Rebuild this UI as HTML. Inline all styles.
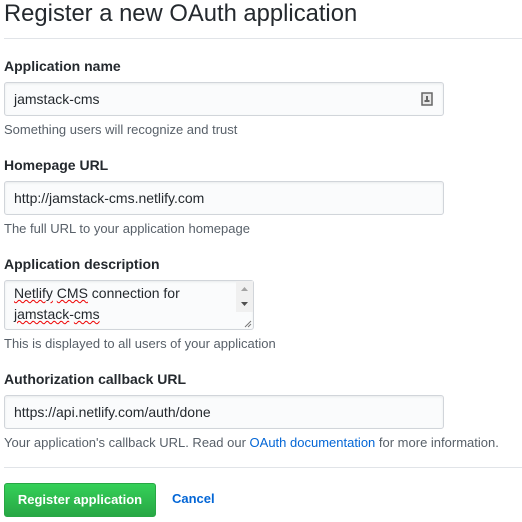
<!DOCTYPE html>
<html><head><style>
body{margin:0;background:#fff;font-family:"Liberation Sans",Arial,sans-serif;color:#24292e;width:522px;height:522px;overflow:hidden;position:relative}
.a{position:absolute}
h1{position:absolute;left:4px;top:0;margin:0;font-size:23.8px;font-weight:normal;line-height:28px}
.hr{position:absolute;left:4px;width:518px;height:1px;background:#e1e4e8}
.lbl{position:absolute;left:4px;font-weight:bold;font-size:14px;line-height:18px}
.in{position:absolute;left:4px;height:32px;background:#fafbfc;border:1px solid #d1d5da;border-radius:3px;font-size:14px;line-height:32px;padding-left:9px;box-sizing:content-box;width:429px;box-shadow:inset 0 1px 2px rgba(27,31,35,.075)}
.note{position:absolute;left:4px;font-size:13px;color:#586069;line-height:16px}
a{color:#0366d6;text-decoration:none}
.sq{text-decoration:underline wavy #e00;text-decoration-thickness:1px}
</style></head><body>
<h1>Register a new OAuth application</h1>
<div class="hr" style="top:38px"></div>

<div class="lbl" style="top:57px">Application name</div>
<div class="in" style="top:82px">jamstack-cms
<svg class="a" style="right:10px;top:9px" width="12" height="14" viewBox="0 0 12 14"><rect x="1" y="1" width="10" height="12" fill="#e8e8e8" stroke="#666" stroke-width="1.5"/><rect x="5" y="4" width="2" height="4" fill="#666"/><rect x="3.5" y="8" width="5" height="2" fill="#666"/></svg></div>
<div class="note" style="top:122px">Something users will recognize and trust</div>

<div class="lbl" style="top:156px">Homepage URL</div>
<div class="in" style="top:181px">http://jamstack-cms.netlify.com</div>
<div class="note" style="top:221px">The full URL to your application homepage</div>

<div class="lbl" style="top:255px">Application description</div>
<div class="in" style="top:280px;width:239px;line-height:21px;padding-top:2px;height:46px"><span class="sq">Netlify</span> <span class="sq">CMS</span> connection for<br><span class="sq">jamstack</span>-<span class="sq">cms</span>
<div class="a" style="right:0;top:0;width:17px;height:31px;background:#f0f0f0"></div>
<svg class="a" style="right:4px;top:5px" width="9" height="24"><path d="M1 5 L4.5 1 L8 5Z" fill="#a3a3a3"/><path d="M1 16 L8 16 L4.5 20Z" fill="#505050"/></svg>
<svg class="a" style="right:1px;bottom:1px" width="8" height="8"><path d="M7 1 L1 7 M7 4 L4 7" stroke="#777" stroke-width="1"/></svg>
</div>
<div class="note" style="top:336px">This is displayed to all users of your application</div>

<div class="lbl" style="top:370px">Authorization callback URL</div>
<div class="in" style="top:395px">https://api.netlify.com/auth/done</div>
<div class="note" style="top:435px">Your application's callback URL. Read our <a>OAuth documentation</a> for more information.</div>

<div class="hr" style="top:467px"></div>
<div class="a" style="left:4px;top:483px;width:150px;height:32px;border:1px solid #28a745;border-radius:3px;background:linear-gradient(#34d058,#28a745);color:#fff;font-weight:bold;font-size:13px;line-height:32px;text-align:center">Register application</div>
<a class="a" style="left:172px;top:491px;font-weight:bold;font-size:13px">Cancel</a>
</body></html>
